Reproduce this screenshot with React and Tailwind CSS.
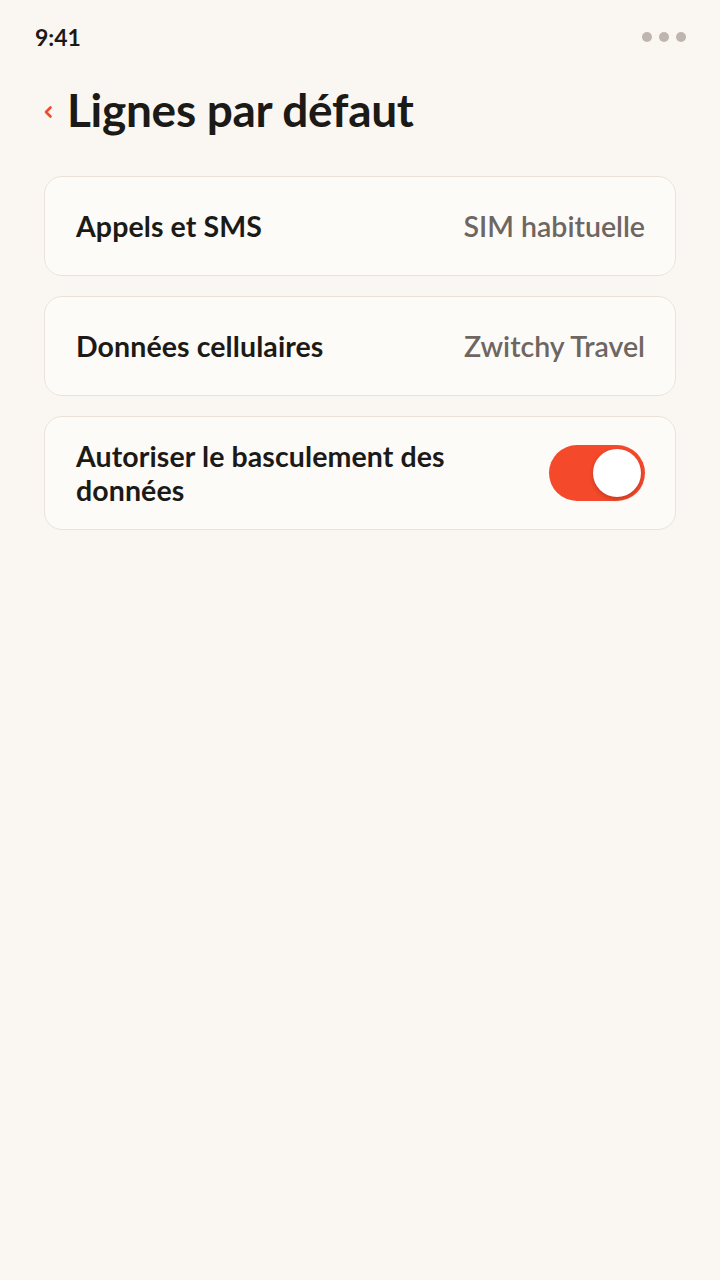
import React, { useState } from 'react';

const font = { fontFamily: 'Lato, "Open Sans", sans-serif' };

const Toggle = ({ on, onChange }) => (
  <button
    onClick={() => onChange(!on)}
    className={`relative flex h-[56px] w-[96px] shrink-0 items-center rounded-full p-[4px] ${on ? 'bg-[#f4492b]' : 'bg-[#e2dcd5]'}`}
  >
    <span
      className={`h-[48px] w-[48px] rounded-full bg-white shadow-[0_2px_4px_rgba(0,0,0,0.2)] ${on ? 'ml-auto' : ''}`}
    />
  </button>
);

const Row = ({ label, value }) => (
  <div className="flex items-center justify-between rounded-[18px] border border-[#ebe3da] bg-[#fdfbf8] py-[32px] pl-[31px] pr-[30px]">
    <span className="text-[28.5px] font-bold leading-[34px] tracking-[0.1px] text-[#1c1a17]">{label}</span>
    <span className="text-[28.5px] font-semibold leading-[34px] text-[#6e6661]">{value}</span>
  </div>
);

export default function App() {
  const [fallback, setFallback] = useState(true);

  return (
    <div className="min-h-[1280px] w-[720px] bg-[#faf7f3]" style={font}>
      {/* status bar */}
      <div className="flex items-center justify-between pl-[35px] pr-[34px] pt-[22px]">
        <span className="text-[23px] font-bold leading-[30px] text-[#1c1a17]">9:41</span>
        <div className="flex gap-[7px]">
          <span className="h-[10px] w-[10px] rounded-full bg-[#bdb5ae]" />
          <span className="h-[10px] w-[10px] rounded-full bg-[#bdb5ae]" />
          <span className="h-[10px] w-[10px] rounded-full bg-[#bdb5ae]" />
        </div>
      </div>

      {/* header */}
      <div className="flex items-center gap-[14px] px-[43px] pt-[32px]">
        <svg width="10" height="14" viewBox="0 0 10 14" className="mt-[4px]">
          <path d="M7.5 2.5 L3 7 L7.5 11.5" fill="none" stroke="#f4492b" strokeWidth="2.6" strokeLinecap="round" strokeLinejoin="round" />
        </svg>
        <h1 className="text-[46px] font-bold leading-[52px] tracking-[-0.3px] text-[#1c1a17]">Lignes par défaut</h1>
      </div>

      {/* settings */}
      <div className="flex flex-col gap-[20px] px-[44px] pt-[40px]">
        <Row label="Appels et SMS" value="SIM habituelle" />
        <Row label="Données cellulaires" value="Zwitchy Travel" />
        <div className="flex items-center justify-between gap-[24px] rounded-[18px] border border-[#ebe3da] bg-[#fdfbf8] py-[22px] pl-[31px] pr-[30px]">
          <span className="max-w-[420px] text-[28.5px] font-bold leading-[34px] tracking-[0.1px] text-[#1c1a17]">
            Autoriser le basculement des données
          </span>
          <Toggle on={fallback} onChange={setFallback} />
        </div>
      </div>
    </div>
  );
}
